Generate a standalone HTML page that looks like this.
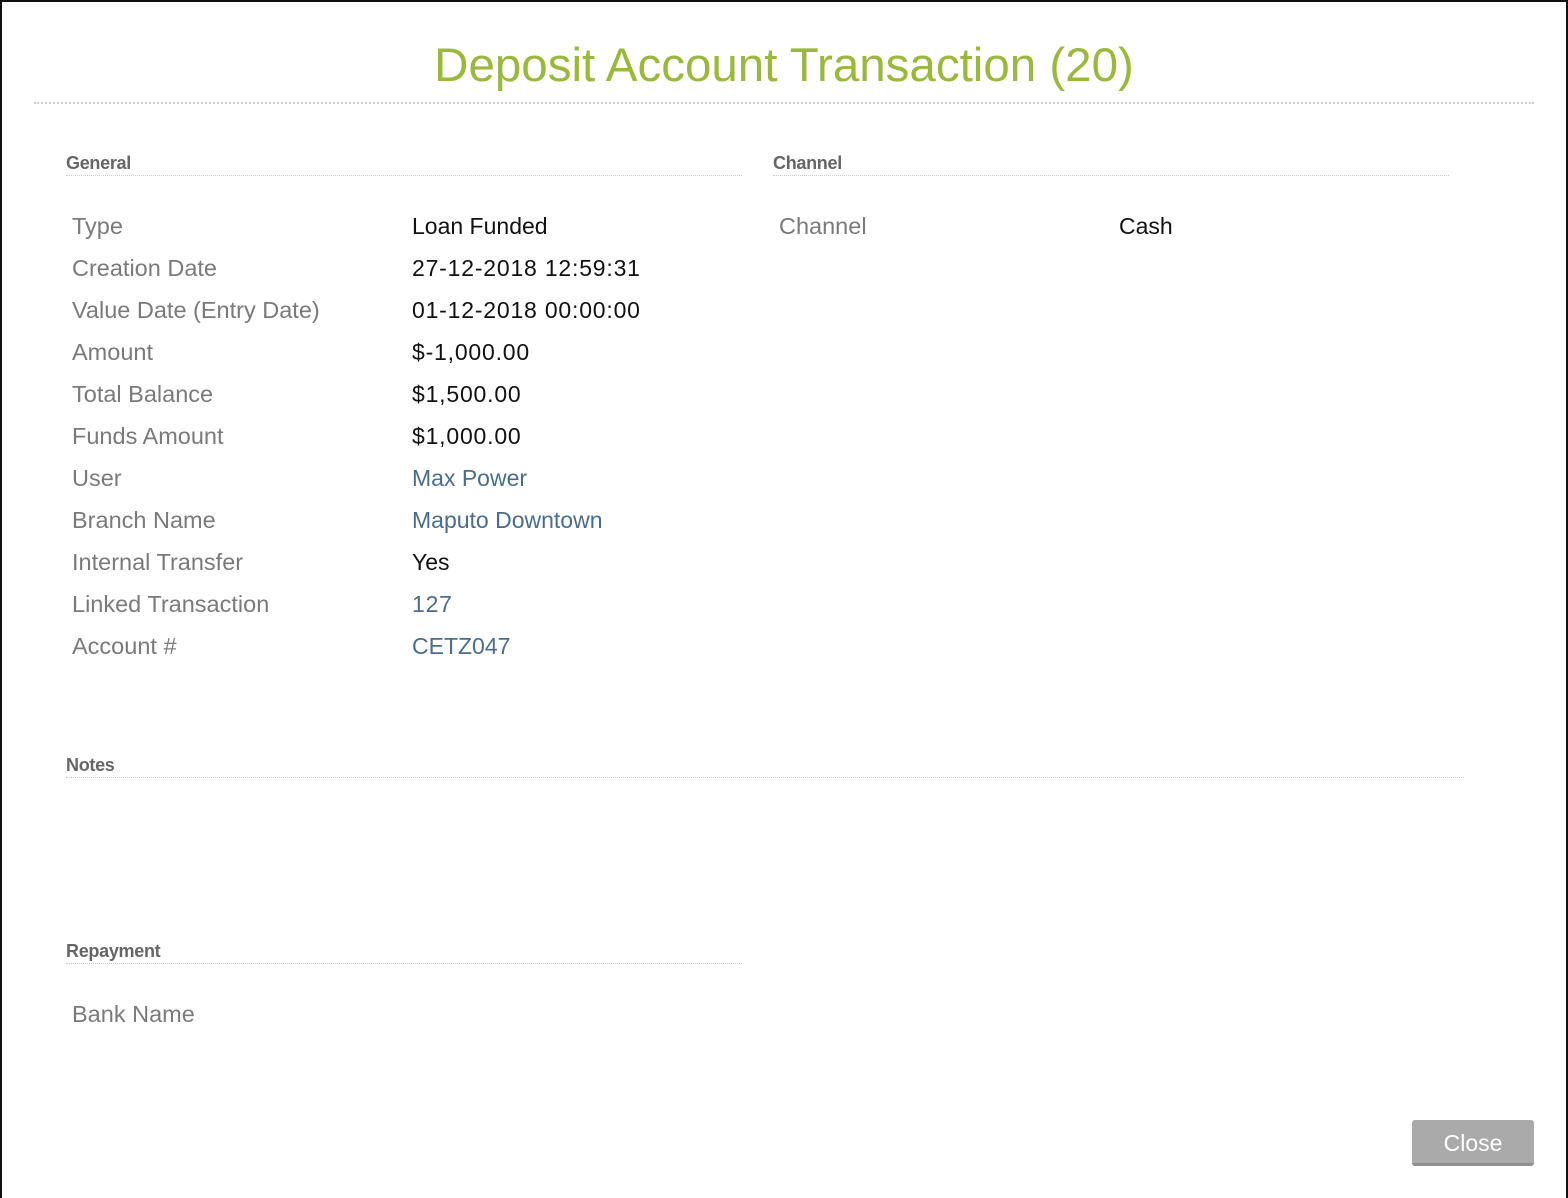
<!DOCTYPE html>
<html><head><meta charset="utf-8"><style>
*{margin:0;padding:0;box-sizing:border-box}
body{width:1568px;height:1198px;background:#fff;font-family:"Liberation Sans",sans-serif;position:relative;overflow:hidden;border-top:2px solid #111;border-left:2px solid #111;border-right:2px solid #111}
.a{position:absolute;white-space:nowrap}
h1{position:absolute;left:0;width:1564px;top:35px;text-align:center;font-weight:normal;font-size:47.5px;color:#9ab93b;line-height:58px}
.dl{position:absolute;border-top:2px dotted #ccc;height:0}
.sh{font-size:18px;color:#666;font-weight:bold;letter-spacing:-0.3px}
.l{font-size:23.5px;color:#7a7a7a;line-height:28px}
.v{font-size:23px;color:#111;line-height:28px}
.n{letter-spacing:0.8px}
.k{color:#4a6d8c}
.btn{position:absolute;left:1410px;top:1118px;width:122px;height:46px;background:#aaa;border-radius:3px;border-bottom:3px solid #8f8f8f;color:#fff;font-size:23px;text-align:center;line-height:46px}
</style></head><body>
<h1>Deposit Account Transaction (20)</h1>
<div class="dl" style="left:32px;width:1500px;top:100px;border-top-width:2px"></div>

<div class="a sh" style="left:64px;top:151px">General</div>
<div class="dl" style="left:64px;width:676px;top:173px;border-top-width:1px"></div>
<div class="a sh" style="left:771px;top:151px">Channel</div>
<div class="dl" style="left:771px;width:676px;top:173px;border-top-width:1px"></div>

<div class="a l" style="left:70px;top:210px">Type</div><div class="a v" style="left:410px;top:210px">Loan Funded</div>
<div class="a l" style="left:70px;top:252px">Creation Date</div><div class="a v n" style="left:410px;top:252px">27-12-2018 12:59:31</div>
<div class="a l" style="left:70px;top:294px">Value Date (Entry Date)</div><div class="a v n" style="left:410px;top:294px">01-12-2018 00:00:00</div>
<div class="a l" style="left:70px;top:336px">Amount</div><div class="a v n" style="left:410px;top:336px">$-1,000.00</div>
<div class="a l" style="left:70px;top:378px">Total Balance</div><div class="a v n" style="left:410px;top:378px">$1,500.00</div>
<div class="a l" style="left:70px;top:420px">Funds Amount</div><div class="a v n" style="left:410px;top:420px">$1,000.00</div>
<div class="a l" style="left:70px;top:462px">User</div><div class="a v k" style="left:410px;top:462px">Max Power</div>
<div class="a l" style="left:70px;top:504px">Branch Name</div><div class="a v k" style="left:410px;top:504px">Maputo Downtown</div>
<div class="a l" style="left:70px;top:546px">Internal Transfer</div><div class="a v" style="left:410px;top:546px">Yes</div>
<div class="a l" style="left:70px;top:588px">Linked Transaction</div><div class="a v k n" style="left:410px;top:588px">127</div>
<div class="a l" style="left:70px;top:630px">Account #</div><div class="a v k" style="left:410px;top:630px">CETZ047</div>

<div class="a l" style="left:777px;top:210px">Channel</div><div class="a v" style="left:1117px;top:210px">Cash</div>

<div class="a sh" style="left:64px;top:753px">Notes</div>
<div class="dl" style="left:64px;width:1398px;top:775px;border-top-width:1px"></div>

<div class="a sh" style="left:64px;top:939px">Repayment</div>
<div class="dl" style="left:64px;width:676px;top:961px;border-top-width:1px"></div>
<div class="a l" style="left:70px;top:998px">Bank Name</div>

<div class="btn">Close</div>
</body></html>
